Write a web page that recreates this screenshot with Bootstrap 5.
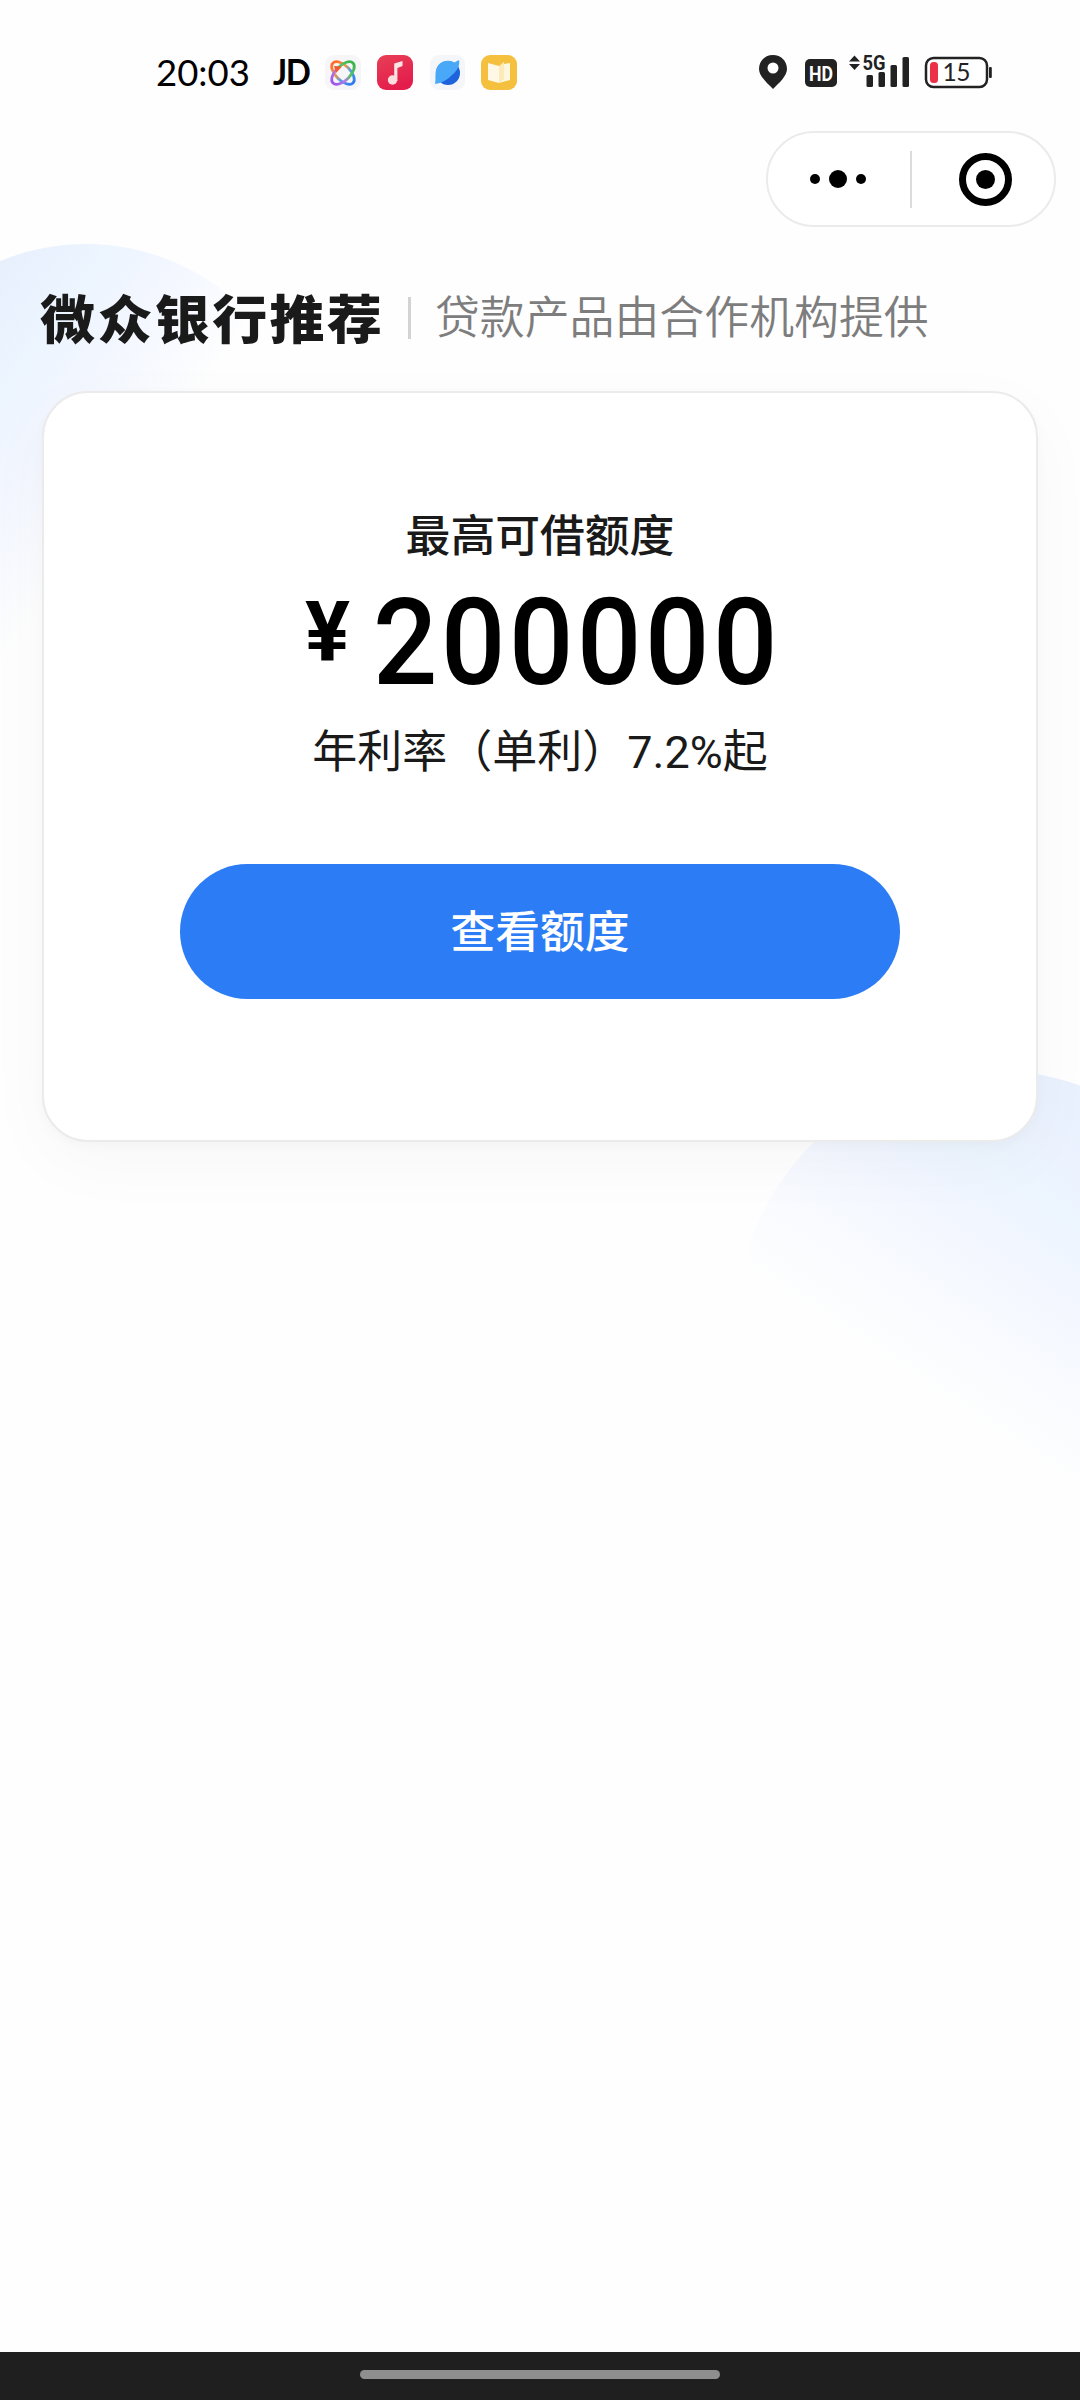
<!DOCTYPE html>
<html lang="zh-CN">
<head>
<meta charset="utf-8">
<meta name="viewport" content="width=device-width, initial-scale=1">
<title>微众银行推荐</title>
<link href="https://cdn.jsdelivr.net/npm/bootstrap@5.3.0/dist/css/bootstrap.min.css" rel="stylesheet">
<style>
  body { width: 1080px; height: 2400px; background: #fefefe; font-family: Roboto, "Noto Sans CJK SC", sans-serif; color: #1a1a1a; }
  .screen { height: 2400px; isolation: isolate; }
  .backdrop { z-index: -1; }
  .statusbar { height: 131px; padding: 55px 88px 40px 156px; color: #000; }
  .statusbar svg { overflow: visible; }
  .clock { font: 400 36.5px/34px Lato, sans-serif; width: 117px; }
  .jd { font: 700 35.5px/34px Lato, sans-serif; letter-spacing: -1.5px; width: 52px; transform: scaleX(.93); transform-origin: left; }
  .capsule { width: 290px; height: 96px; border: 2px solid #ebebeb; border-radius: 48px; margin-right: 24px; background: #fff; }
  .heading { height: 164px; padding: 18px 0 0 40px; }
  .brand { font: 900 55px/80px "Noto Sans CJK SC", sans-serif; letter-spacing: 2.4px; transform: scaleY(.95); padding-bottom: 4px; }
  .rule { width: 3px; height: 42px; background: #d3d3d3; margin: 0 24px 0 23.5px; }
  .slogan { font: 350 44.9px/80px "Noto Sans CJK SC", sans-serif; color: #7d7d7d; padding-bottom: 7px; }
  .quota { width: 996px; height: 751px; margin-left: 42px; border: 2px solid #ebebeb; border-radius: 46px; background: #fff; padding-top: 107px; box-shadow: 0 20px 70px rgba(0,0,0,.03), 0 4px 12px rgba(0,0,0,.025); }
  .label-max { font: 500 44.8px/66px "Noto Sans CJK SC", sans-serif; }
  .amount { height: 134px; color: #000; margin-top: 20px; padding-left: 261px; }
  .yen { font-size: 84px; font-weight: 700; line-height: 84px; margin-right: 23px; padding-top: 5px; }
  .sum { font-size: 121px; font-weight: 500; line-height: 115px; letter-spacing: 3.8px; transform: scaleX(.937); transform-origin: left; height: 115px; }
  .rate { font: 400 45px/66px Roboto, "Noto Sans CJK SC", sans-serif; }
  .btn-check-quota { --bs-btn-bg: #2b7cf5; --bs-btn-color: #fff; --bs-btn-hover-bg: #216ee2; --bs-btn-hover-color: #fff; width: 720px; height: 135px; margin-top: 78px; padding-bottom: 12px; font: 500 44.8px/66px "Noto Sans CJK SC", sans-serif; border: 0; }
  .homebar { height: 48px; background: #1f1f1f; padding-top: 18px; }
  .pill { width: 360px; height: 9px; background: #8e8e8e; }
</style>
</head>
<body>
<div class="screen d-flex flex-column position-relative overflow-hidden">
  <svg class="backdrop position-absolute top-0 start-0" width="1080" height="2400" viewBox="0 0 1080 2400" aria-hidden="true">
    <defs>
      <linearGradient id="gl" gradientUnits="userSpaceOnUse" x1="-20" y1="270" x2="182" y2="418">
        <stop offset="0" stop-color="#e7effe"/><stop offset=".38" stop-color="#edf5ff"/><stop offset=".58" stop-color="#f2f6ff"/><stop offset=".8" stop-color="#f8faff"/><stop offset="1" stop-color="#fefefe"/>
      </linearGradient>
      <linearGradient id="gr" gradientUnits="userSpaceOnUse" x1="1080" y1="1080" x2="888" y2="1370">
        <stop offset="0" stop-color="#e9f0fe"/><stop offset=".36" stop-color="#edf5ff"/><stop offset=".52" stop-color="#f2f6ff"/><stop offset=".78" stop-color="#f9fbff"/><stop offset="1" stop-color="#fefefe"/>
      </linearGradient>
    </defs>
    <circle cx="86" cy="468" r="224" fill="url(#gl)"/>
    <path d="M1080 1085.500A256 256 0 1 0 992 1582L1080 1567z" fill="url(#gr)"/>
  </svg>

  <header class="statusbar d-flex justify-content-between">
    <div class="d-flex">
      <span class="clock">20:03</span>
      <span class="jd">JD</span>
      <svg width="193" height="36" viewBox="325 55 193 36">
        <defs>
          <linearGradient id="orb" gradientUnits="userSpaceOnUse" x1="333" y1="63" x2="353" y2="83"><stop offset="0" stop-color="#ff6a2b"/><stop offset=".35" stop-color="#f59a3a"/><stop offset=".65" stop-color="#4a9df0"/><stop offset="1" stop-color="#2f7bf0"/></linearGradient>
          <linearGradient id="orb2" gradientUnits="userSpaceOnUse" x1="353" y1="63" x2="333" y2="83"><stop offset="0" stop-color="#3cb54a"/><stop offset=".4" stop-color="#5cc06a"/><stop offset=".65" stop-color="#b57be8"/><stop offset="1" stop-color="#9c55e8"/></linearGradient>
          <linearGradient id="mus" x1="0" y1="0" x2=".4" y2="1"><stop offset="0" stop-color="#e84056"/><stop offset="1" stop-color="#e41c4c"/></linearGradient>
        </defs>
        <rect x="325" y="55" width="36" height="35" rx="9" fill="#f6f5f8"/>
        <g fill="none" stroke-width="2.800">
          <path d="M333 63A14.140 7.300 45 1 1 353 83A14.140 7.300 45 1 1 333 63z" stroke="url(#orb)"/>
          <path d="M353 63A14.140 7.300 135 1 1 333 83A14.140 7.300 135 1 1 353 63z" stroke="url(#orb2)"/>
        </g>
        <path d="M334 66l8 .5-6 6.500z" fill="#f4582e"/>
        <rect x="377" y="55" width="36" height="35" rx="9" fill="url(#mus)"/>
        <path d="M394.200 63.500l8.300-2.500v5l-5.100 2v13h-3.200z" fill="#fde4e6"/>
        <circle cx="392.500" cy="80" r="4.700" fill="#fcdde0"/>
        <rect x="430" y="55" width="35" height="35" rx="9" fill="#f4f6f9"/>
        <circle cx="448" cy="73" r="12" fill="#1e63dc"/>
        <path d="M435 84c1-5 0-6 .8-13a12.300 12.300 0 0 1 18.500-8.500l4.700-2.500c1 5-1 10-7 15-5 5-10 8-17 9z" fill="#49a9f8"/>
        <rect x="481" y="55" width="36" height="35" rx="9" fill="#f4c03d"/>
        <path d="M488 63l11 3v17l-11-3z" fill="#fff8e6"/><path d="M499 66l5-4v18l-5 3z" fill="#fdeab9"/><path d="M504 64l6-1v17l-11 3 5-4z" fill="#fff7dd"/>
      </svg>
    </div>
    <svg width="233" height="36" viewBox="759 55 233 36">
      <path d="M773 55c-8 0-14 6-14 14 0 7 8 14 14 20 6-6 14-13 14-20 0-8-6-14-14-14z" fill="#222"/>
      <circle cx="773" cy="68" r="5.500" fill="#fff"/>
      <rect x="805" y="59" width="32" height="28" rx="5" fill="#222"/>
      <text x="821" y="80.500" text-anchor="middle" font-family="Roboto" font-weight="700" font-size="21" textLength="24" lengthAdjust="spacingAndGlyphs" fill="#fff">HD</text>
      <path d="M854.500 55.500l5.500 6h-11zM854.500 70l5.500-6h-11z" fill="#222"/>
      <text x="862.500" y="70" font-family="Roboto" font-weight="700" font-size="20.500" textLength="23" lengthAdjust="spacingAndGlyphs" fill="#222">5G</text>
      <g fill="#222"><rect x="866.500" y="75" width="6.500" height="12" rx="1.500"/><rect x="878.500" y="72" width="6.500" height="15" rx="1.500"/><rect x="890.500" y="65" width="6.500" height="22" rx="1.500"/><rect x="902.500" y="57" width="6.500" height="30" rx="1.500"/></g>
      <rect x="926" y="58" width="61" height="29" rx="7.500" fill="#fff" stroke="#222" stroke-width="2.500"/>
      <rect x="989" y="67" width="2.800" height="11" rx="1" fill="#222"/>
      <rect x="930" y="62" width="8" height="21" rx="3.500" fill="#ec3048"/>
      <text x="942.500" y="81" font-family="Lato" font-size="24.500" textLength="28" fill="#222">15</text>
    </svg>
  </header>

  <div class="d-flex justify-content-end">
    <div class="capsule d-flex align-items-center">
      <svg width="286" height="92" viewBox="768 133 286 92" role="img" aria-label="菜单">
        <circle cx="815" cy="179" r="5"/><circle cx="838" cy="179" r="9"/><circle cx="861" cy="179" r="5"/>
        <rect x="910" y="151" width="2" height="57" fill="#dcdcdc"/>
        <circle cx="985.500" cy="179.500" r="23" fill="none" stroke="#000" stroke-width="7"/><circle cx="985.500" cy="179.500" r="9.500"/>
      </svg>
    </div>
  </div>

  <div class="heading d-flex align-items-center">
    <h1 class="brand m-0">微众银行推荐</h1>
    <span class="rule"></span>
    <span class="slogan">贷款产品由合作机构提供</span>
  </div>

  <main class="quota d-flex flex-column align-items-center">
    <div class="label-max">最高可借额度</div>
    <div class="amount d-flex align-items-start align-self-start"><span class="yen">¥</span><span class="sum">200000</span></div>
    <div class="rate">年利率（单利）7.2%起</div>
    <button type="button" class="btn btn-check-quota rounded-pill">查看额度</button>
  </main>

  <footer class="homebar mt-auto d-flex justify-content-center"><div class="pill rounded-pill"></div></footer>
</div>
<script src="https://cdn.jsdelivr.net/npm/bootstrap@5.3.0/dist/js/bootstrap.bundle.min.js"></script>
</body>
</html>
